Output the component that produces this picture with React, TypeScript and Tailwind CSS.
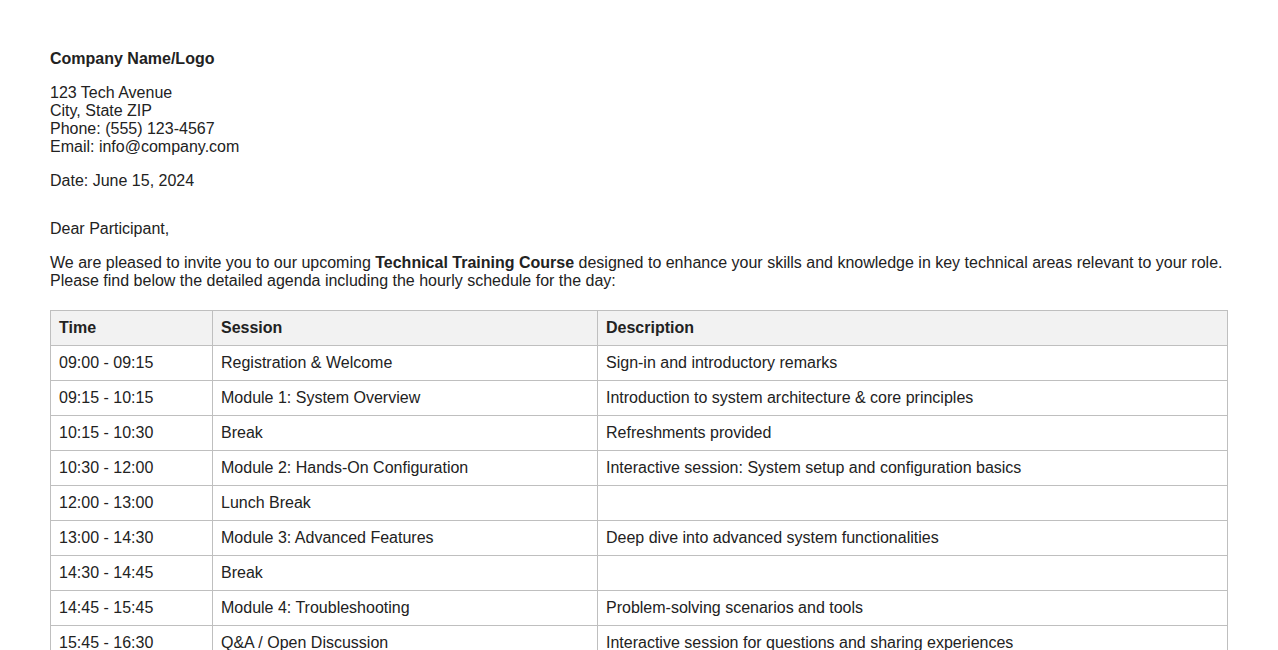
import React from "react";

const rows: [string, string, string][] = [
  ["09:00 - 09:15", "Registration & Welcome", "Sign-in and introductory remarks"],
  ["09:15 - 10:15", "Module 1: System Overview", "Introduction to system architecture & core principles"],
  ["10:15 - 10:30", "Break", "Refreshments provided"],
  ["10:30 - 12:00", "Module 2: Hands-On Configuration", "Interactive session: System setup and configuration basics"],
  ["12:00 - 13:00", "Lunch Break", ""],
  ["13:00 - 14:30", "Module 3: Advanced Features", "Deep dive into advanced system functionalities"],
  ["14:30 - 14:45", "Break", ""],
  ["14:45 - 15:45", "Module 4: Troubleshooting", "Problem-solving scenarios and tools"],
  ["15:45 - 16:30", "Q&A / Open Discussion", "Interactive session for questions and sharing experiences"],
];

export default function App() {
  return (
    <div
      className="min-h-screen bg-white px-[50px] pt-[50px] pb-10 text-[16px] leading-[18px] text-[#222]"
      style={{ fontFamily: '"Liberation Sans", Arial, sans-serif' }}
    >
      <div className="font-bold">Company Name/Logo</div>
      <div className="mt-[16px]">
        <div>123 Tech Avenue</div>
        <div>City, State ZIP</div>
        <div>Phone: (555) 123-4567</div>
        <div>Email: info@company.com</div>
      </div>
      <div className="mt-[16px]">Date: June 15, 2024</div>
      <div className="mt-[30px]">Dear Participant,</div>
      <p className="mt-[16px]">
        We are pleased to invite you to our upcoming <strong>Technical Training Course</strong> designed to enhance your
        skills and knowledge in key technical areas relevant to your role.
        <br />
        Please find below the detailed agenda including the hourly schedule for the day:
      </p>
      <table className="mt-[20px] w-full border-collapse border border-[#bfbfbf] text-left">
        <colgroup>
          <col className="w-[162px]" />
          <col className="w-[385px]" />
          <col />
        </colgroup>
        <thead>
          <tr className="bg-[#f2f2f2]">
            <th className="border border-[#bfbfbf] px-[8px] py-[8px] font-bold">Time</th>
            <th className="border border-[#bfbfbf] px-[8px] py-[8px] font-bold">Session</th>
            <th className="border border-[#bfbfbf] px-[8px] py-[8px] font-bold">Description</th>
          </tr>
        </thead>
        <tbody>
          {rows.map((r, i) => (
            <tr key={i}>
              <td className="h-[35px] border border-[#bfbfbf] px-[8px] py-[8px]">{r[0]}</td>
              <td className="h-[35px] border border-[#bfbfbf] px-[8px] py-[8px]">{r[1]}</td>
              <td className="h-[35px] border border-[#bfbfbf] px-[8px] py-[8px]">{r[2]}</td>
            </tr>
          ))}
        </tbody>
      </table>
    </div>
  );
}
